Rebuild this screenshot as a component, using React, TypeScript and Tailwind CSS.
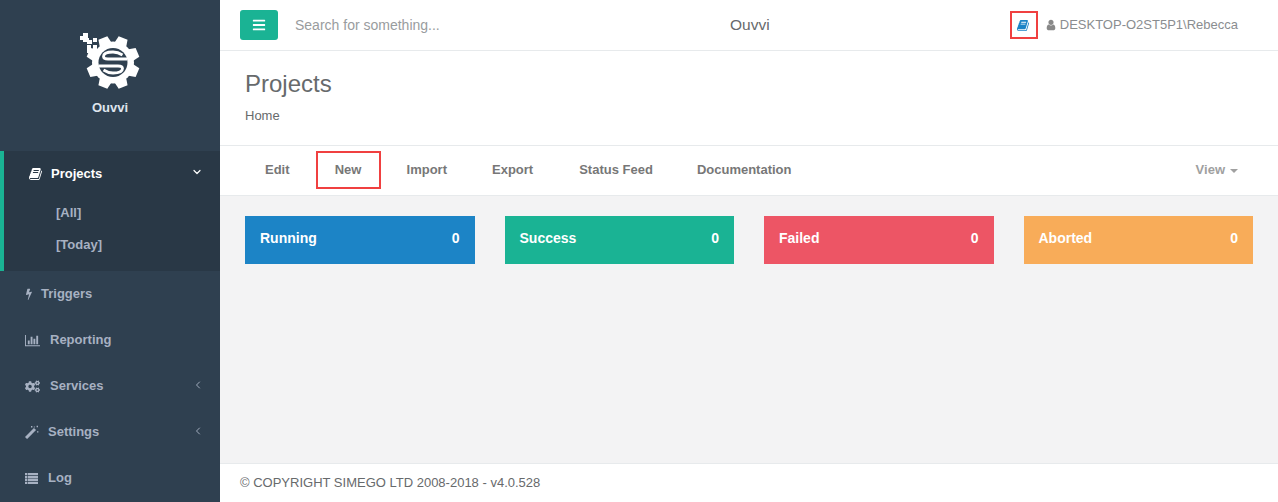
import React from "react";
import { FaBars, FaCogs } from "react-icons/fa";
import { ChevronDown, ChevronLeft } from "lucide-react";

const BOOK =
  "M1639 478q40 57 18 129l-275 906q-19 64-76.5 107.5t-122.5 43.5h-923q-77 0-148.5-53.5t-99.5-131.5q-24-67-2-127 0-4 3-27t4-37q1-8-3-21.5t-3-19.5q2-11 8-21t16.5-23.5 16.5-23.5q23-38 45-91.5t30-91.5q3-10 .5-30t-.5-28q3-11 17-28t17-23q21-36 42-92t25-90q1-9-2.5-32t.5-28q4-13 22-30.5t22-22.5q19-26 42.5-84.5t27.5-96.5q1-8-3-25.5t-2-26.5q2-8 9-18t18-23 17-21q8-12 16.5-30.5t15-35 16-36 19.5-32 26.5-23.5 36-11.5 47.5 5.5l-1 3q38-9 51-9h761q74 0 114 56t18 130l-274 906q-36 119-71.5 153.5t-128.5 34.5h-869q-27 0-38 15-11 16-1 43 24 70 144 70h923q29 0 56-15.5t35-41.5l300-987q7-22 5-57 38 15 59 43zm-1064 2q-4 13 2 22.5t20 9.5h608q13 0 25.5-9.5t16.5-22.5l21-64q4-13-2-22.5t-20-9.5h-608q-13 0-25.5 9.5t-16.5 22.5zm-83 256q-4 13 2 22.5t20 9.5h608q13 0 25.5-9.5t16.5-22.5l21-64q4-13-2-22.5t-20-9.5h-608q-13 0-25.5 9.5t-16.5 22.5z";
const USER =
  "M1536 1399q0 109-62.5 187t-150.5 78h-854q-88 0-150.5-78t-62.5-187q0-85 8.5-160.5t31.5-152 58.5-131 94-89 134.5-34.5q131 128 313 128t313-128q76 0 134.5 34.5t94 89 58.5 131 31.5 152 8.5 160.5zm-256-887q0 159-112.5 271.5t-271.5 112.5-271.5-112.5-112.5-271.5 112.5-271.5 271.5-112.5 271.5 112.5 112.5 271.5z";
const BOLT =
  "M1333 566q18 20 7 44l-540 1157q-13 25-42 25-4 0-14-2-17-5-25.5-19t-4.5-30l197-808-406 101q-4 1-12 1-18 0-31-11-18-15-13-39l201-825q4-14 16-23t28-9h328q19 0 32 12.5t13 29.5q0 8-5 18l-171 463 396-98q8-2 12-2 19 0 34 15z";
const BARS =
  "M640 896v512h-256v-512h256zm384-512v1024h-256v-1024h256zm1024 1152v128h-2048v-1536h128v1408h1920zm-640-896v768h-256v-768h256zm384-384v1152h-256v-1152h256z";

function Fa({ d, size, vb = "0 0 1792 1792", className = "" }: { d: string; size: number; vb?: string; className?: string }) {
  return (
    <svg width={size} height={size} viewBox={vb} fill="currentColor" className={`shrink-0 ${className}`}>
      <path d={d} />
    </svg>
  );
}

function Wand() {
  return (
    <svg width="14" height="14" viewBox="0 0 14 14" className="shrink-0">
      <path d="M1 13 L10 4" stroke="currentColor" strokeWidth="3" />
      <path d="M6 1h1.4v1.4H6zM11.6 0.8h1.4v1.4h-1.4zM12 6.2h1.4v1.4H12zM8.8 1.6h1v1h-1z" fill="currentColor" />
    </svg>
  );
}

function ListIcon() {
  return (
    <svg width="13" height="11" viewBox="0 0 13 11" fill="currentColor" className="shrink-0">
      <path d="M0 0h2.4v2.3H0zM3 0h10v2.3H3zM0 2.9h2.4v2.3H0zM3 2.9h10v2.3H3zM0 5.8h2.4v2.3H0zM3 5.8h10v2.3H3zM0 8.7h2.4v2.3H0zM3 8.7h10v2.3H3z" />
    </svg>
  );
}

function Logo() {
  const teeth = [0, 45, 90, 135, 180, 225, 270, 315];
  return (
    <svg width="62" height="58" viewBox="0 0 62 58" className="block">
      <g transform="translate(34 30.5)">
        {teeth.map((a) => (
          <path key={a} d="M-6.5 -18 L-4.8 -26.5 H4.8 L6.5 -18 Z" fill="#fff" transform={`rotate(${a + 22.5})`} />
        ))}
        <circle r="21" fill="#fff" />
        <circle r="14.5" fill="#2f4050" />
        <path d="M9.5 -7.5 Q5 -10.5 0 -10.5 Q-9.5 -10.5 -9.5 -6 Q-9.5 -3.5 -5 -3.5 H14.5" stroke="#fff" strokeWidth="2.8" fill="none" />
        <path d="M-9.5 7.5 Q-5 10.5 0 10.5 Q9.5 10.5 9.5 6 Q9.5 3.5 5 3.5 H-14.5" stroke="#fff" strokeWidth="2.8" fill="none" />
      </g>
      <g fill="#fff">
        <rect x="1" y="4" width="4" height="4" />
        <rect x="4" y="1" width="5" height="5" />
        <rect x="4" y="6" width="6" height="4" />
        <rect x="8" y="8" width="5" height="4" />
        <rect x="8" y="13" width="4" height="8" />
        <rect x="14" y="6" width="4" height="4" />
        <rect x="14" y="13" width="4" height="5" />
      </g>
    </svg>
  );
}

function NavItem({ icon, label, gap, arrow }: { icon: React.ReactNode; label: string; gap: string; arrow?: boolean }) {
  return (
    <div className="h-[46px] pl-[25px] pr-[16px] flex items-center text-[#a7b1c2] font-bold text-[13px]">
      <span className={`flex items-center ${gap}`}>
        {icon}
        <span>{label}</span>
      </span>
      {arrow && <ChevronLeft size={12} strokeWidth={1.9} className="ml-auto -mt-[3px]" />}
    </div>
  );
}

function Stat({ label, color }: { label: string; color: string }) {
  return (
    <div className={`h-12 flex items-center justify-between px-[15px] pb-1 text-white font-bold text-[14px] ${color}`}>
      <span>{label}</span>
      <span>0</span>
    </div>
  );
}

export default function App() {
  return (
    <div className="w-[1278px] h-[502px] flex overflow-hidden text-[#676a6c] text-[13px] font-['Liberation_Sans',Arial,sans-serif]">
      <aside className="w-[220px] shrink-0 bg-[#2f4050] flex flex-col">
        <div className="h-[151px] flex flex-col items-center pt-[32px]">
          <Logo />
          <div className="mt-[9px] text-[13px] font-bold text-[#dfe4ed] leading-[18px]">Ouvvi</div>
        </div>
        <div className="h-[120px] bg-[#293846] border-l-4 border-[#1ab394]">
          <div className="h-[45px] pl-[25px] pr-[17px] flex items-center text-white font-bold text-[13px]">
            <Fa d={BOOK} size={14} className="mr-[8px]" />
            <span>Projects</span>
            <ChevronDown size={12} strokeWidth={2.4} className="ml-auto -mt-[3px]" />
          </div>
          <div className="pl-[52px] pt-[1px] text-[#a7b1c2] font-bold text-[13px]">
            <div className="h-[32px] flex items-center">[All]</div>
            <div className="h-[32px] flex items-center">[Today]</div>
          </div>
        </div>
        <NavItem icon={<Fa d={BOLT} size={12} className="-ml-[2px]" />} label="Triggers" gap="gap-[6px]" />
        <NavItem icon={<Fa d={BARS} size={15} vb="0 0 2048 1792" />} label="Reporting" gap="gap-[10px]" />
        <NavItem icon={<FaCogs className="text-[15px]" />} label="Services" gap="gap-[10px]" arrow />
        <NavItem icon={<Wand />} label="Settings" gap="gap-[9px]" arrow />
        <NavItem icon={<ListIcon />} label="Log" gap="gap-[10px]" />
      </aside>
      <main className="flex-1 min-w-0 flex flex-col bg-[#f3f3f4]">
        <header className="h-[51px] bg-white border-b border-[#e7eaec] flex items-center pl-5 pr-10 relative">
          <div className="w-[38px] h-[30px] rounded-[3px] bg-[#1ab394] flex items-center justify-center text-white">
            <FaBars className="text-[14px]" />
          </div>
          <span className="ml-[17px] text-[14px] text-[#999c9e]">Search for something...</span>
          <span className="absolute left-[510px] text-[15.5px] text-[#676a6c]">Ouvvi</span>
          <div className="ml-auto flex items-center">
            <span className="w-[28px] h-[28px] border-2 border-[#f04040] flex items-center justify-center text-[#1c84c6] mr-[8px]">
              <Fa d={BOOK} size={13} />
            </span>
            <Fa d={USER} size={12} className="text-[#888] mr-[3px] -ml-[1px]" />
            <span className="text-[#8a8d90] text-[13px]">DESKTOP-O2ST5P1\Rebecca</span>
          </div>
        </header>
        <section className="h-[95px] bg-white border-b border-[#e7eaec] pl-[25px] pt-[18px]">
          <h1 className="text-[24px] leading-[30px] font-normal">Projects</h1>
          <div className="mt-[8px] text-[13px] leading-[18px]">Home</div>
        </section>
        <nav className="h-[50px] bg-white border-b border-[#e7eaec] flex items-center pl-[25px] pr-[40px] pb-[2px] font-bold text-[13px] text-[#777]">
          <span className="ml-5">Edit</span>
          <span className="ml-[26px] w-[65px] h-[38px] border-2 border-[#f04040] flex items-center justify-center">New</span>
          <span className="ml-[26px]">Import</span>
          <span className="ml-[45px]">Export</span>
          <span className="ml-[46px]">Status Feed</span>
          <span className="ml-[44px]">Documentation</span>
          <span className="ml-auto text-[#a0a0a0] flex items-center">
            View
            <span className="ml-[5px] mt-[2px] border-x-4 border-t-4 border-x-transparent border-t-[#a0a0a0]" />
          </span>
        </nav>
        <div className="flex-1 px-[25px] pt-5">
          <div className="grid grid-cols-4 gap-[30px]">
            <Stat label="Running" color="bg-[#1c84c6]" />
            <Stat label="Success" color="bg-[#1ab394]" />
            <Stat label="Failed" color="bg-[#ed5565]" />
            <Stat label="Aborted" color="bg-[#f8ac59]" />
          </div>
        </div>
        <footer className="h-[39px] bg-white border-t border-[#e7eaec] flex items-center pl-5 text-[13px]">
          © COPYRIGHT SIMEGO LTD 2008-2018 - v4.0.528
        </footer>
      </main>
    </div>
  );
}
